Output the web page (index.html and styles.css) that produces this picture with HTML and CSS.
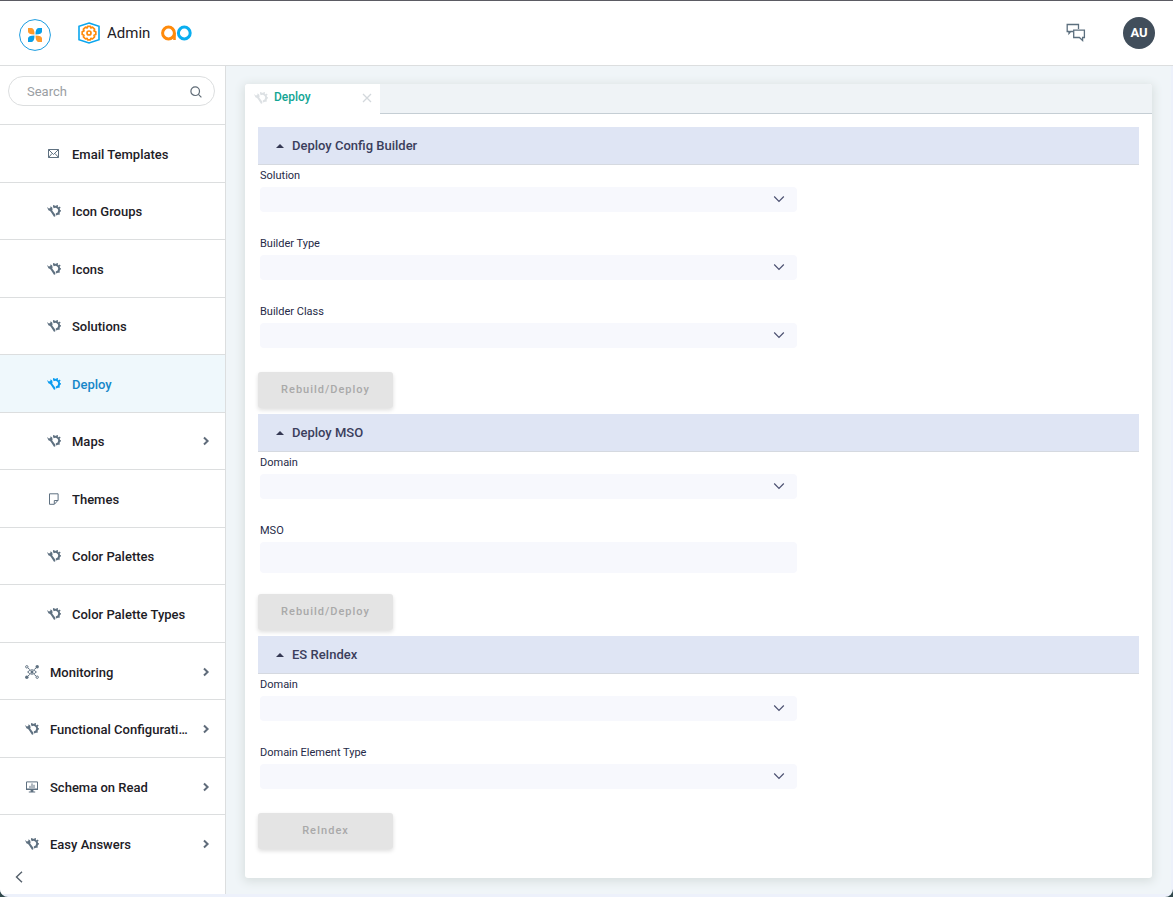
FILE: index.html
```html
<!DOCTYPE html>
<html lang="en">
<head>
<meta charset="utf-8">
<meta name="viewport" content="width=device-width, initial-scale=1">
<title>Admin - Deploy</title>
<link rel="stylesheet" href="styles.css">
</head>
<body>
<svg class="defs" aria-hidden="true">
  <symbol id="tools" viewBox="0 0 14 12">
    <path fill="currentColor" d="M0 2 1.900 3.400 3.300 2.900 3.500 1.200 5.200 2.400 5.600 4.400 5.200 5.600 8.400 9.800 8.200 11.600 7 11.700 3.900 7 3 6 1.400 5.300Z"/>
    <path fill="none" stroke="currentColor" stroke-width="2" d="M6.300 2.300C9 .9 12.200 2.600 12.200 5.500 12.200 7.600 10.900 9 9 9.500"/>
    <path fill="none" stroke="currentColor" stroke-width="1.500" d="M7 2 6.700.2M9.900 1.800 10.300.1M11.900 3.200l1.300-1M12.600 5.800l1.300.3M11.300 8.400l1.200 1.100"/>
  </symbol>
  <symbol id="mail" viewBox="0 0 14 12">
    <path fill="none" stroke="currentColor" d="M1.500 1.500h10v8h-10zM1.500 1.500 6.500 6.500l5-5M1.500 9.500 5 5.500M11.500 9.500 8 5.500"/>
  </symbol>
  <symbol id="note" viewBox="0 0 14 12">
    <path fill="none" stroke="currentColor" d="M2.500.8h8.600v6.400L7.400 11.300H2.500zM7.300 11V7.500h3.800"/>
  </symbol>
  <symbol id="monitor" viewBox="0 0 14 14">
    <g fill="none" stroke="currentColor"><path d="M2.600 7Q7 2.600 11.400 7 7 11.400 2.600 7ZM3 3l1.800 1.600M11 3 9.200 4.600M3 11l1.800-1.600M11 11 9.200 9.400"/><circle cx="1.800" cy="1.800" r="1.200"/><circle cx="12.200" cy="12.200" r="1.200"/></g>
    <g fill="currentColor"><circle cx="7" cy="7" r="1.500"/><circle cx="12.200" cy="1.800" r="1.700"/><circle cx="1.800" cy="12.200" r="1.700"/></g>
  </symbol>
  <symbol id="screen" viewBox="0 0 14 12">
    <path fill="none" stroke="currentColor" d="M1.500.9h11v7.600h-11zM5 7V4.800M7 7V2.400M9 7V3.800"/>
    <path fill="currentColor" d="M1 7.600h12V9H8.400v1.400h1.800v1H3.800v-1h1.800V9H1z"/>
  </symbol>
  <symbol id="right" viewBox="0 0 8 10"><path fill="none" stroke="currentColor" stroke-width="2" d="m2 1.500 3.600 3.500L2 8.500"/></symbol>
  <symbol id="down" viewBox="0 0 12 8"><path fill="none" stroke="currentColor" stroke-width="1.200" d="m1.200 1.500 4.800 4.800 4.800-4.800"/></symbol>
</svg>
<div class="app">
  <header class="topbar">
    <a class="home" href="#" aria-label="Home">
      <svg width="32" height="32" viewBox="0 0 32 32"><circle cx="16" cy="16" r="15.400" fill="#fff" stroke="#1b9ce0"/>
        <path fill="#ff9a2b" d="M9 9h3.500Q15.500 9 15.500 15.500 9 15.500 9 12.500zM23 23h-3.500Q16.500 23 16.500 16.500 23 16.500 23 19.500z"/>
        <path fill="#0a9fe8" d="M23 9h-3.500Q16.500 9 16.500 15.500 23 15.500 23 12.500zM9 23h3.500Q15.500 23 15.500 16.500 9 16.500 9 19.500z"/></svg>
    </a>
    <svg width="22" height="22" viewBox="0 0 22 22" aria-hidden="true"><path fill="none" stroke="#0aa6ee" stroke-width="1.600" d="M11 1 21 4.300V17.700L11 21 1 17.700V4.300Z"/>
      <path fill="none" stroke="#ff8a0a" stroke-width="1.700" stroke-linejoin="round" d="M9.600 4.300h2.800l.5 1.600 1.500-.7 2.200 2-.6 1.700 1.800.8v2.800l-1.800.8.6 1.600-2.200 2.100-1.500-.7-.5 1.500H9.600l-.5-1.500-1.500.7-2.200-2.100.6-1.600-1.800-.8V9.700L6 8.900l-.6-1.700 2.200-2 1.500.7Z"/><circle cx="11" cy="11" r="2" fill="none" stroke="#ff8a0a" stroke-width="1.700"/></svg>
    <span class="title">Admin</span>
    <svg width="31" height="16" viewBox="0 0 31 16" role="img" aria-label="Company logo"><g fill="none" stroke-width="3"><circle cx="7.500" cy="8" r="5.900" stroke="#ff8a0a"/><path d="M13.500 8v7" stroke="#ff8a0a" stroke-width="2.600"/><circle cx="23.300" cy="8" r="5.900" stroke="#0aaef0"/></g></svg>
    <button class="chat" type="button" aria-label="Messages">
      <svg width="20" height="20" viewBox="0 0 20 20" fill="none" stroke="#5c6f7e" stroke-width="1.300"><path d="M7 8.500H4.600L3 10.500v-2H1.200v-7H12.500V6"/><path d="M7.700 7.200h10.700v7.300h-1.800v3l-3.200-3H7.700z"/></svg>
    </button>
    <button class="avatar" type="button">AU</button>
  </header>
  <div class="body">
    <aside class="side">
      <form class="search" role="search">
        <input class="search-box" type="search" placeholder="Search" aria-label="Search">
        <svg width="12" height="12" viewBox="0 0 12 12" fill="none" stroke="#5f6b76" stroke-width="1.200" aria-hidden="true"><circle cx="5.200" cy="5.200" r="4.300"/><path d="m8.400 8.400 3 3"/></svg>
      </form>
      <nav class="nav" aria-label="Main">
        <a class="item sub" href="#"><svg class="icon"><use href="#mail"/></svg><span class="name">Email Templates</span></a>
        <a class="item sub" href="#"><svg class="icon"><use href="#tools"/></svg><span class="name">Icon Groups</span></a>
        <a class="item sub" href="#"><svg class="icon"><use href="#tools"/></svg><span class="name">Icons</span></a>
        <a class="item sub" href="#"><svg class="icon"><use href="#tools"/></svg><span class="name">Solutions</span></a>
        <a class="item sub active" href="#" aria-current="page"><svg class="icon"><use href="#tools"/></svg><span class="name">Deploy</span></a>
        <a class="item sub" href="#"><svg class="icon"><use href="#tools"/></svg><span class="name">Maps</span><svg class="more"><use href="#right"/></svg></a>
        <a class="item sub" href="#"><svg class="icon"><use href="#note"/></svg><span class="name">Themes</span></a>
        <a class="item sub" href="#"><svg class="icon"><use href="#tools"/></svg><span class="name">Color Palettes</span></a>
        <a class="item sub" href="#"><svg class="icon"><use href="#tools"/></svg><span class="name">Color Palette Types</span></a>
        <a class="item" href="#"><svg class="icon tall"><use href="#monitor"/></svg><span class="name">Monitoring</span><svg class="more"><use href="#right"/></svg></a>
        <a class="item" href="#"><svg class="icon"><use href="#tools"/></svg><span class="name">Functional Configuration</span><svg class="more"><use href="#right"/></svg></a>
        <a class="item" href="#"><svg class="icon"><use href="#screen"/></svg><span class="name">Schema on Read</span><svg class="more"><use href="#right"/></svg></a>
        <a class="item" href="#"><svg class="icon"><use href="#tools"/></svg><span class="name">Easy Answers</span><svg class="more"><use href="#right"/></svg></a>
      </nav>
      <button class="collapse" type="button" aria-label="Collapse menu">
        <svg width="8" height="12" viewBox="0 0 8 12" fill="none" stroke="#55606b" stroke-width="1.400"><path d="M7 .8 1.500 6 7 11.200"/></svg>
      </button>
    </aside>
    <main class="main">
      <div class="panel">
        <div class="tabs">
          <div class="tab"><svg class="icon"><use href="#tools"/></svg><a class="tab-name" href="#">Deploy</a>
            <button class="close" type="button" aria-label="Close tab"><svg width="10" height="10" viewBox="0 0 10 10" stroke="#d3d8dc" stroke-width="1.300"><path d="m1 1 8 8M9 1 1 9"/></svg></button></div>
        </div>
        <form class="content">
          <section>
            <h2 class="head"><button class="toggle" type="button" aria-expanded="true"><span class="caret"></span>Deploy Config Builder</button></h2>
            <div class="field"><label class="label" for="solution">Solution</label><div class="pick"><select class="control" id="solution"><option></option></select><svg class="down"><use href="#down"/></svg></div></div>
            <div class="field"><label class="label" for="btype">Builder Type</label><div class="pick"><select class="control" id="btype"><option></option></select><svg class="down"><use href="#down"/></svg></div></div>
            <div class="field last"><label class="label" for="bclass">Builder Class</label><div class="pick"><select class="control" id="bclass"><option></option></select><svg class="down"><use href="#down"/></svg></div></div>
            <button class="action" type="button" disabled>Rebuild/Deploy</button>
          </section>
          <section>
            <h2 class="head"><button class="toggle" type="button" aria-expanded="true"><span class="caret"></span>Deploy MSO</button></h2>
            <div class="field"><label class="label" for="domain">Domain</label><div class="pick"><select class="control" id="domain"><option></option></select><svg class="down"><use href="#down"/></svg></div></div>
            <div class="field"><label class="label" for="mso">MSO</label><input class="control text" id="mso" type="text"></div>
            <button class="action" type="button" disabled>Rebuild/Deploy</button>
          </section>
          <section>
            <h2 class="head"><button class="toggle" type="button" aria-expanded="true"><span class="caret"></span>ES ReIndex</button></h2>
            <div class="field"><label class="label" for="esdomain">Domain</label><div class="pick"><select class="control" id="esdomain"><option></option></select><svg class="down"><use href="#down"/></svg></div></div>
            <div class="field last"><label class="label" for="etype">Domain Element Type</label><div class="pick"><select class="control" id="etype"><option></option></select><svg class="down"><use href="#down"/></svg></div></div>
            <button class="action" type="button" disabled>ReIndex</button>
          </section>
        </form>
      </div>
    </main>
  </div>
</div>
</body>
</html>
```
FILE: styles.css
```css
* { box-sizing: border-box; }
html { background: #31494d; }
body { margin: 0; font: 500 13px/20px Roboto, sans-serif; color: #1d2026; }
button, input, select { font: inherit; color: inherit; border: 0; padding: 0; background: none; }
a { color: inherit; text-decoration: none; }
.defs { position: absolute; width: 0; height: 0; }

.app { display: flex; flex-direction: column; min-height: 100vh; background: #edf1fb; border-radius: 0 0 8px 8px; overflow: hidden; }

.topbar { display: flex; align-items: center; height: 66px; padding: 0 18px 0 19px; background: #fff; border-top: 1px solid #5b5b63; border-bottom: 1px solid #dcdedf; }
.home { display: flex; margin: 3px 27px 0 0; }
.title { margin: 0 11px 0 7px; font-size: 15px; font-weight: 400; }
.chat { display: flex; margin-left: auto; margin-right: 37px; }
.avatar { width: 32px; height: 32px; border-radius: 50%; background: #414e5b; color: #fff; font-weight: 700; }

.body { display: flex; flex: 1; padding: 0 2px 3px 0; }
.side { display: flex; flex-direction: column; flex: none; width: 226px; background: #fff; border-right: 1px solid #dcdedf; }
.search { display: flex; align-items: center; height: 30px; margin: 10px 10px 18px 8px; padding: 1px 12px 0 18px; border: 1px solid #dcdedf; border-radius: 15px; }
.search-box { flex: 1; min-width: 0; outline: 0; font-weight: 400; }
.search-box::placeholder { color: #9a9ea3; opacity: 1; }

.nav { display: flex; flex-direction: column; flex: 1; }
.item { display: flex; align-items: center; flex: 1 0 56px; padding: 3px 15px 0 25px; border-top: 1px solid #dcdedf; }
.sub { padding-left: 47px; }
.icon { flex: none; width: 14px; height: 12px; margin: 0 11px 2px 0; color: #5f7181; }
.tall { height: 14px; }
.name { flex: 1; overflow: hidden; white-space: nowrap; text-overflow: ellipsis; margin-right: 13px; }
.more { flex: none; width: 8px; height: 10px; margin-bottom: 2px; color: #5f6b7a; }
.active { background: #eff8fc; color: #1587c9; }
.active .icon { color: #0a9cf0; }
.collapse { display: flex; align-items: center; height: 22px; padding: 0 0 12px 15px; }

.main { display: flex; flex: 1; padding: 18px 19px 16px; background: #f0f5f8; }
.panel { flex: 1; background: #fff; border-radius: 3px; box-shadow: 0 2px 10px 2px #d9e0e0; }
.tabs { display: flex; height: 30px; background: #eff3f6; border-radius: 3px 3px 0 0; box-shadow: inset 0 -1px #c5ced4; }
.tab { display: flex; align-items: center; width: 135px; padding: 0 8px 4px 9px; background: #fff; border-radius: 3px 0 0 0; font-size: 12px; color: #12a594; }
.tab .icon { margin: 2px 6px 0 0; color: #dde1e4; }
.tab-name { flex: 1; }
.close { display: flex; margin-top: 2px; }

.content { padding: 13px; }
.head { margin: 0; height: 38px; background: #dfe5f4; border-bottom: 1px solid #d5d9e0; font: inherit; }
.toggle { display: flex; align-items: center; gap: 8px; width: 100%; height: 100%; padding-left: 18px; color: #3b3e5c; text-align: left; }
.caret { border: 4px solid transparent; border-top: 0; border-bottom: 4px solid #353853; }
.field { width: 61%; margin: 0 0 21px 2px; }
.last { margin-bottom: 24px; }
.label { display: block; line-height: 22px; font-size: 11px; font-weight: 400; color: #262a48; }
.pick { display: grid; align-items: center; }
.pick > * { grid-area: 1 / 1; }
.control { display: block; width: 100%; height: 25px; padding: 0 8px; background: #f7f8fd; border-radius: 4px; appearance: none; }
.text { height: 31px; }
.down { width: 12px; height: 8px; justify-self: end; margin: 0 12px 1px 0; color: #4b5070; pointer-events: none; }
.action { display: block; min-width: 135px; height: 36px; margin: 0 0 6px; border-radius: 3px; background: #e4e4e4; color: #a9a9a9; font-size: 11px; letter-spacing: 1px; box-shadow: 0 2px 4px #0002; }
```
